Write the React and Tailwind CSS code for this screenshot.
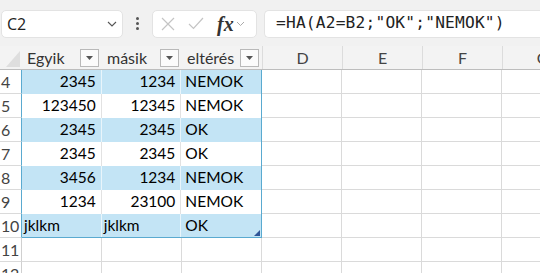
import React from 'react';

const rows = [
  { n: 4, a: '2345', b: '1234', c: 'NEMOK', band: true },
  { n: 5, a: '123450', b: '12345', c: 'NEMOK', band: false },
  { n: 6, a: '2345', b: '2345', c: 'OK', band: true },
  { n: 7, a: '2345', b: '2345', c: 'OK', band: false },
  { n: 8, a: '3456', b: '1234', c: 'NEMOK', band: true },
  { n: 9, a: '1234', b: '23100', c: 'NEMOK', band: false },
  { n: 10, a: 'jklkm', b: 'jklkm', c: 'OK', band: true, text: true },
];

const FilterButton = () => (
  <div className="w-[19px] h-[18px] border border-[#b9b9b9] bg-[#fbfbfb] flex items-center justify-center shrink-0">
    <svg width="7" height="4" viewBox="0 0 7 4">
      <path d="M0 0 L7 0 L3.5 4 Z" fill="#555" />
    </svg>
  </div>
);

const HeaderCell = ({ label }) => (
  <div className="w-[80px] h-full flex items-center justify-between pl-[5px] pr-[3px] shrink-0">
    <span className="text-[16px] text-[#333]">{label}</span>
    <FilterButton />
  </div>
);

const RowNum = ({ n, table }) => (
  <div
    className={`w-[22px] h-full shrink-0 border-b border-[#dadada] border-r ${
      table ? 'border-r-[#5aaad0]' : 'border-r-[#d0d0d0]'
    } bg-white text-[16px] text-[#444] flex items-center pl-[1px] tracking-tight`}
  >
    {n}
  </div>
);

export default function App() {
  return (
    <div className="w-[540px] h-[273px] overflow-hidden bg-white font-['Lato','Noto_Sans',sans-serif] text-black">
      {/* Name box + formula bar */}
      <div className="h-[46px] bg-[#f1f1f1] flex items-center pt-[1px]">
        <div className="w-[122px] h-[28px] ml-[1px] bg-white rounded-[5px] border border-[#e3e3e3] flex items-center justify-between pl-[5px] pr-[5px]">
          <span className="text-[16px] text-[#222] font-['Open_Sans',sans-serif]">C2</span>
          <svg width="10" height="6" viewBox="0 0 10 6">
            <path d="M1 1 L5 5 L9 1" fill="none" stroke="#555" strokeWidth="1.1" />
          </svg>
        </div>
        <div className="w-[29px] flex flex-col items-center justify-center gap-[2px]">
          <span className="w-[3px] h-[3px] bg-[#555] rounded-full" />
          <span className="w-[3px] h-[3px] bg-[#555] rounded-full" />
          <span className="w-[3px] h-[3px] bg-[#555] rounded-full" />
        </div>
        <div className="w-[105px] h-[28px] bg-white rounded-[5px] border border-[#e3e3e3] flex items-center pl-[8px] gap-[13px]">
          <svg width="14" height="14" viewBox="0 0 14 14">
            <path d="M1 1 L13 13 M13 1 L1 13" stroke="#c4c4c4" strokeWidth="1.2" />
          </svg>
          <svg width="16" height="13" viewBox="0 0 16 13">
            <path d="M1 7 L5.5 11.5 L15 1" fill="none" stroke="#c4c4c4" strokeWidth="1.2" />
          </svg>
          <div className="flex items-center gap-[2px]">
            <span className="font-['Liberation_Serif',serif] italic font-bold text-[20px] text-[#333] leading-none">fx</span>
            <svg width="9" height="6" viewBox="0 0 9 6">
              <path d="M1 1 L4.5 4.5 L8 1" fill="none" stroke="#aaa" strokeWidth="1" />
            </svg>
          </div>
        </div>
        <div className="ml-[7px] flex-1 h-[28px] bg-white rounded-l-[5px] border border-r-0 border-[#e3e3e3] flex items-center pl-[11px]">
          <span className="font-['DejaVu_Sans_Mono',monospace] text-[16.2px] text-[#222] tracking-[0.2px]">
            =HA(A2=B2;"OK";"NEMOK")
          </span>
        </div>
      </div>

      {/* Column header row (table headers shown) */}
      <div className="h-[24px] bg-[#f3f3f3] border-b border-[#bdbdbd] flex">
        <div className="w-[22px] h-full shrink-0 flex items-end justify-end pr-[2px] pb-[2px]">
          <svg width="14" height="16" viewBox="0 0 14 16">
            <path d="M14 0 L14 16 L0 16 Z" fill="#dedede" />
          </svg>
        </div>
        <HeaderCell label="Egyik" />
        <HeaderCell label="másik" />
        <HeaderCell label="eltérés" />
        {['D', 'E', 'F', 'G'].map((l) => (
          <div
            key={l}
            className="w-[80px] h-full shrink-0 border-l border-[#dcdcdc] flex items-center justify-center text-[16px] text-[#444]"
          >
            {l}
          </div>
        ))}
      </div>

      {/* Grid rows */}
      {rows.map((r) => {
        const last = r.n === 10;
        const bg = r.band ? 'bg-[#c3e4f5]' : 'bg-white';
        const inner = r.band ? 'border-r-[#e9f5fb]' : 'border-r-[#e2e2e2]';
        const align = r.text ? 'justify-start pl-[2px]' : 'justify-end pr-[5px]';
        return (
          <div key={r.n} className="h-[24px] flex">
            <RowNum n={r.n} table />
            <div
              className={`w-[240px] h-full shrink-0 flex ${bg} border-r border-[#5aaad0] ${
                last ? 'border-b border-b-[#5aaad0]' : ''
              }`}
            >
              <div className={`w-[80px] h-full flex items-center ${align} border-r ${inner} text-[15.5px]`}>
                {r.a}
              </div>
              <div className={`w-[80px] h-full flex items-center ${align} border-r ${inner} text-[15.5px]`}>
                {r.b}
              </div>
              <div className="relative w-[80px] h-full flex items-center pl-[4px] text-[15.5px]">
                {r.c}
                {last && (
                  <svg className="absolute right-[1px] bottom-[1px]" width="6" height="6" viewBox="0 0 6 6">
                    <path d="M6 0 L6 6 L0 6 Z" fill="#2f5597" />
                  </svg>
                )}
              </div>
            </div>
            {[0, 1, 2, 3].map((i) => (
              <div key={i} className="w-[80px] h-full shrink-0 border-r border-b border-[#dadada]" />
            ))}
          </div>
        );
      })}
      {[11, 12].map((n) => (
        <div key={n} className="h-[24px] flex">
          <RowNum n={n} />
          {[0, 1, 2, 3, 4, 5, 6].map((i) => (
            <div key={i} className="w-[80px] h-full shrink-0 border-r border-b border-[#dadada]" />
          ))}
        </div>
      ))}
    </div>
  );
}
